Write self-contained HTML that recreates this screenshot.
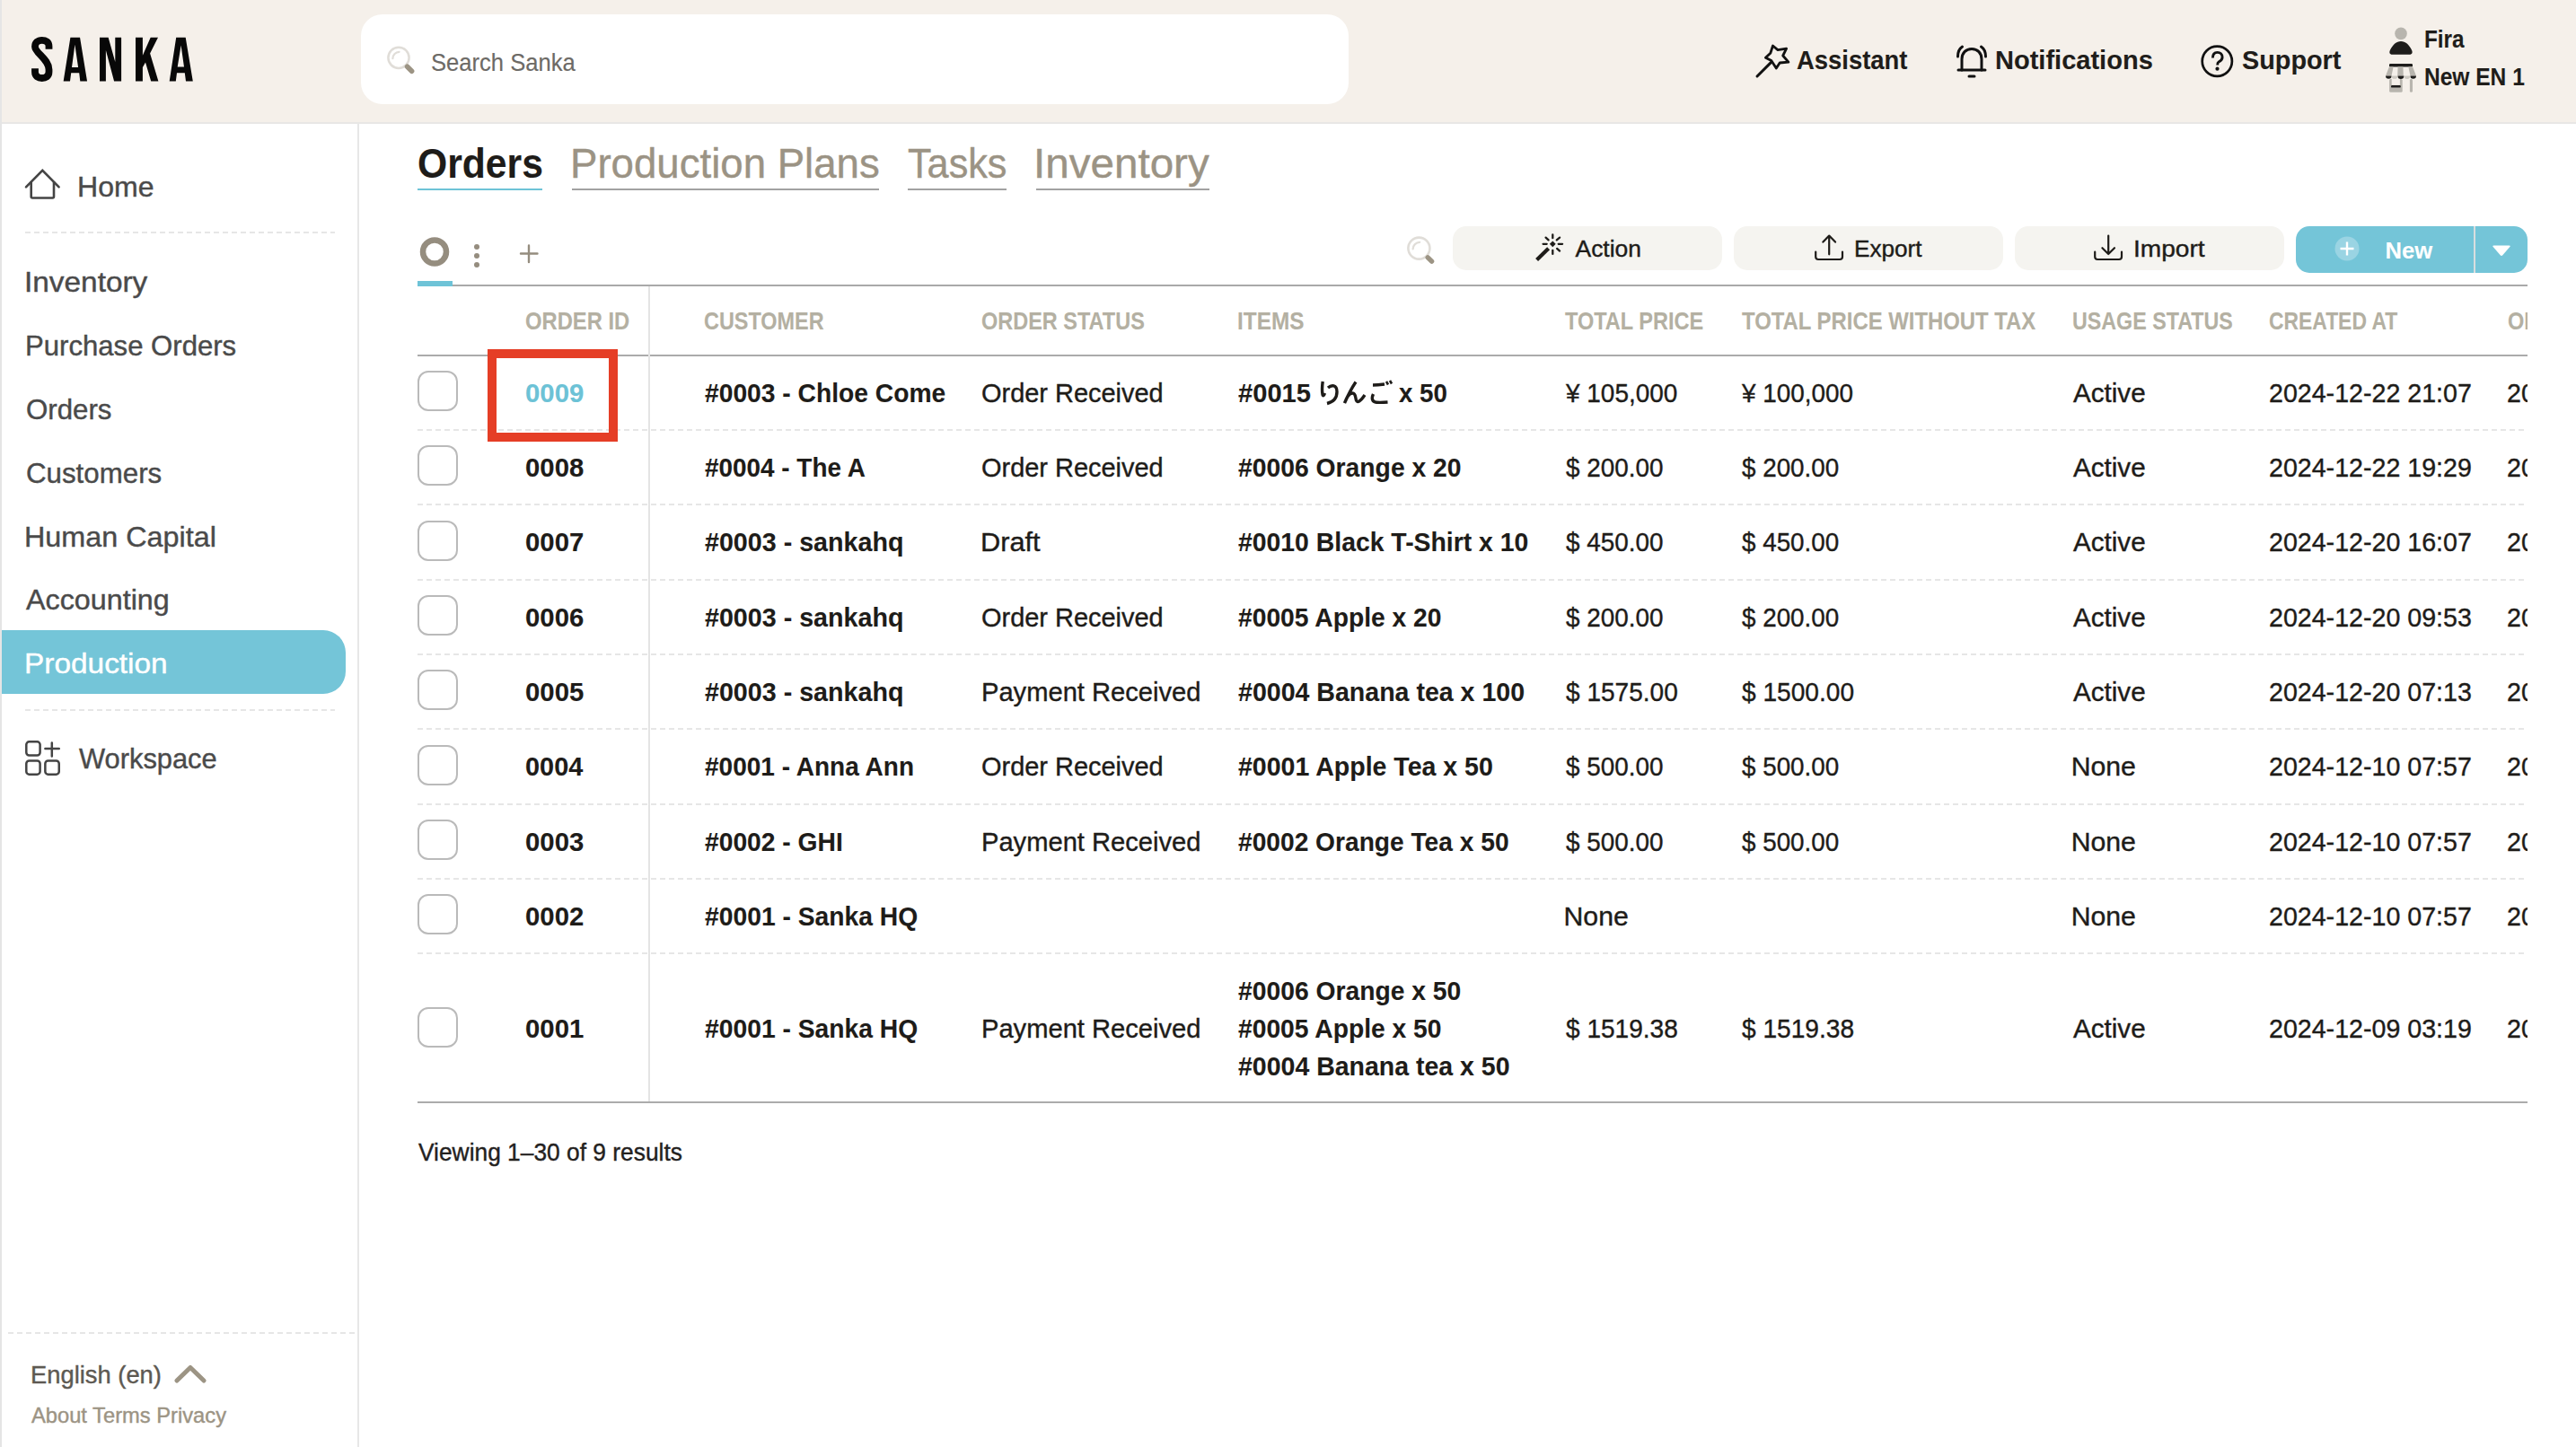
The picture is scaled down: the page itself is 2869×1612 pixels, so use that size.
<!DOCTYPE html>
<html><head><meta charset="utf-8"><title>Sanka</title>
<style>
html,body{margin:0;padding:0;width:2869px;height:1612px;overflow:hidden;background:#fff;font-family:"Liberation Sans",sans-serif;}
.a{position:absolute;box-sizing:border-box;}
.t{position:absolute;white-space:pre;line-height:1;transform-origin:0 0;font-family:"Liberation Sans",sans-serif;-webkit-text-stroke:0.4px currentColor;}
.t.b{-webkit-text-stroke:0.1px currentColor;}
.t.ns{-webkit-text-stroke:0.15px currentColor;}
svg{position:absolute;overflow:visible;}
.hdash{position:absolute;height:2px;background:repeating-linear-gradient(90deg,#e6e6e6 0 6px,transparent 6px 10px);}
.cb{position:absolute;width:45px;height:45px;border:2px solid #bababa;border-radius:12px;box-sizing:border-box;background:#fff;}
.btn{position:absolute;top:252px;height:49px;border-radius:15px;background:#f5f4f0;}
#tbl{position:absolute;left:0;top:0;width:2815px;height:1612px;overflow:hidden;}
</style></head><body>
<!-- header -->
<div class="a" style="left:0;top:0;width:2869px;height:138px;background:#f5f0ea;border-bottom:2px solid #e8e7e5;"></div>
<div class="a" style="left:0;top:0;width:2px;height:1612px;background:#e5e5e5;"></div>
<!-- logo -->
<svg width="240" height="120" style="left:0;top:0" viewBox="0 0 240 120">
 <path d="M54.5,54.8 L54.5,51.5 C54.5,46.5 51,44.8 46.7,44.8 C42,44.8 39,47.5 39,52 C39,59 54.5,66 54.5,77.5 L54.5,80 C54.5,85 51,87 46.7,87 C42.5,87 39,85 39,80 L39,76.2" fill="none" stroke="#080808" stroke-width="7.8"/>
 <path fill="#080808" fill-rule="evenodd" d="M70.65,90.4 L78.4,41.65 L89.05,41.65 L97.05,90.4 L89.3,90.4 L88.2,81.2 L79.2,81.2 L78.0,90.4 Z M80,75 L83.4,49.8 L87.1,75 Z"/>
 <path fill="#080808" d="M111,41.65 L120.65,41.65 L128.3,69 L128.3,41.65 L135.1,41.65 L135.1,90.4 L127.1,90.4 L117.9,56 L117.9,90.4 L111,90.4 Z"/>
 <path fill="#080808" d="M151,41.65 L158.9,41.65 L158.9,61.8 L167.7,41.65 L176,41.65 L167.1,59.5 L176.4,90.4 L168.2,90.4 L162,69.6 L158.9,75 L158.9,90.4 L151,90.4 Z"/>
 <path fill="#080808" fill-rule="evenodd" d="M188.7,90.4 L196.2,41.65 L206.7,41.65 L214.8,90.4 L207,90.4 L205.8,81.2 L197,81.2 L195.8,90.4 Z M197.7,74.6 L201.6,50.6 L205,74.6 Z"/>
</svg>
<!-- search box -->
<div class="a" style="left:401.5px;top:16px;width:1100.5px;height:100px;background:#fff;border-radius:24px;"></div>
<svg width="36" height="36" style="left:429px;top:50px" viewBox="0 0 36 36">
 <circle cx="15" cy="14.3" r="11.6" fill="none" stroke="#e0ddd8" stroke-width="2.5"/>
 <path d="M8.4,15.2 A7.6,7.6 0 0 1 15.6,7.8" fill="none" stroke="#e0ddd8" stroke-width="2.2" stroke-linecap="round"/>
 <path d="M24.6,24.2 L29.6,29.2" stroke="#9c9484" stroke-width="5.6" stroke-linecap="round"/>
</svg>
<!-- assistant icon -->
<svg width="40" height="40" style="left:1954px;top:48px" viewBox="0 0 40 40">
 <path d="M3,37 L18.6,21.4" stroke="#111" stroke-width="3" stroke-linecap="round"/>
 <path d="M20.5,3 L26,7.6 L35.6,6.2 L31.7,14 L37.9,21.2 L28.2,22 L24.3,28 L18.8,19.6 L12.4,16.3 L17.8,11.2 Z" fill="none" stroke="#111" stroke-width="2.8" stroke-linejoin="round"/>
</svg>
<!-- bell -->
<svg width="40" height="40" style="left:2177px;top:49px" viewBox="0 0 40 40">
 <g fill="none" stroke="#111" stroke-width="3" stroke-linecap="round">
 <path d="M8,29 L8,17 C8,10 12.5,5.5 19,5.5 C25.5,5.5 30,10 30,17 L30,29"/>
 <path d="M4,29 L34,29"/>
 <path d="M16,36 L22,36"/>
 <path d="M3.5,14 C3.5,9 5.5,5 8.5,3"/>
 <path d="M34.5,14 C34.5,9 32.5,5 29.5,3"/>
 </g>
</svg>
<!-- support -->
<svg width="40" height="40" style="left:2449px;top:48px" viewBox="0 0 40 40">
 <circle cx="20.3" cy="20.3" r="16.6" fill="none" stroke="#111" stroke-width="2.7"/>
 <path d="M15.4,16.6 C15.4,12.6 17.6,10.4 20.6,10.4 C23.8,10.4 26.1,12.5 26.1,15.8 C26.1,19 23.8,20.1 22,21 C20.9,21.6 20.7,22.6 20.7,24.4" fill="none" stroke="#111" stroke-width="2.9"/>
 <circle cx="20.5" cy="28.7" r="2.1" fill="#111"/>
</svg>
<!-- user -->
<svg width="30" height="34" style="left:2660px;top:29px" viewBox="0 0 30 34">
 <circle cx="14" cy="8.4" r="6.8" fill="#b8b5ae"/>
 <path d="M4.5,31.8 C1.5,31.8 0.6,29.6 2,26.8 C5,20.6 9,17 14,17 C19,17 23,20.6 26,26.8 C27.4,29.6 26.5,31.8 23.5,31.8 Z" fill="#1e1d1b"/>
</svg>
<!-- store -->
<svg width="38" height="36" style="left:2656px;top:70px" viewBox="0 0 38 36">
 <rect x="5" y="0.9" width="26" height="3.5" rx="1.2" fill="#1e1d1b"/>
 <path d="M5,4.3 L9.6,4.3 L7.5,14.4 L1,14.4 Z M14.6,4.3 L20.4,4.3 L20.8,14.4 L14.2,14.4 Z M26.3,4.3 L31,4.3 L35,14.4 L28.5,14.4 Z" fill="#b8b5ae"/>
 <path d="M1,14.4 A3.3,3.3 0 0 0 7.6,14.4 Z M14.4,14.4 A3.5,3.5 0 0 0 21.4,14.4 Z M28.4,14.4 A3.3,3.3 0 0 0 35,14.4 Z" fill="#1e1d1b"/>
 <path d="M7.6,14.4 A3.4,3.4 0 0 0 14.4,14.4 Z M21.4,14.4 A3.5,3.5 0 0 0 28.4,14.4 Z" fill="#cdc9c2"/>
 <rect x="5.1" y="18" width="14.6" height="14.7" rx="1.5" fill="#b8b5ae"/>
 <rect x="7.7" y="18" width="9.2" height="6.8" fill="#f5f0ea"/>
 <rect x="7" y="25" width="10.8" height="2.6" rx="1.2" fill="#1e1d1b"/>
 <rect x="27.9" y="18" width="3.1" height="14.7" rx="1.5" fill="#b8b5ae"/>
</svg>
<!-- sidebar -->
<div class="a" style="left:398px;top:138px;width:2px;height:1474px;background:#e7e7e7;"></div>
<svg width="44" height="40" style="left:26px;top:186px" viewBox="0 0 44 40">
 <path d="M3,22.4 L21.3,3.8 L39.6,22.4" fill="none" stroke="#444" stroke-width="2.6" stroke-linecap="round" stroke-linejoin="miter"/>
 <path d="M8.7,16.5 L8.7,33 Q8.7,34.5 10.2,34.5 L32.5,34.5 Q34,34.5 34,33 L34,16.5" fill="none" stroke="#444" stroke-width="2.6"/>
</svg>
<div class="hdash" style="left:28px;top:258px;width:345px;"></div>
<div class="a" style="left:2px;top:702px;width:383px;height:71px;background:#74c5d8;border-radius:0 25px 25px 0;"></div>
<div class="hdash" style="left:28px;top:790px;width:345px;"></div>
<svg width="44" height="44" style="left:26px;top:823px" viewBox="0 0 44 44">
 <g fill="none" stroke="#444" stroke-width="2.5" stroke-linecap="round">
 <rect x="3.3" y="3.35" width="15.3" height="15.2" rx="3.2"/>
 <rect x="3.3" y="24.45" width="15.3" height="15.2" rx="3.2"/>
 <rect x="24.35" y="24.45" width="15.4" height="15.2" rx="3.2"/>
 <path d="M31.8,4.5 L31.8,19.6 M24.4,11 L39.75,11"/>
 </g>
</svg>
<div class="hdash" style="left:9px;top:1484px;width:389px;"></div>
<svg width="40" height="24" style="left:193px;top:1518px" viewBox="0 0 40 24">
 <path d="M4,20 L19,5.5 L34,20" fill="none" stroke="#9c9484" stroke-width="5" stroke-linecap="round" stroke-linejoin="round"/>
</svg>
<!-- tabs underline -->
<div class="a" style="left:465px;top:210px;width:139px;height:2px;background:#6ec3d7;"></div>
<div class="a" style="left:637px;top:210px;width:342px;height:2px;background:#a2a2a2;"></div>
<div class="a" style="left:1011px;top:210px;width:110px;height:2px;background:#a2a2a2;"></div>
<div class="a" style="left:1154px;top:210px;width:193px;height:2px;background:#a2a2a2;"></div>
<!-- toolbar -->
<svg width="40" height="40" style="left:464px;top:260px" viewBox="0 0 40 40">
 <circle cx="20" cy="20.5" r="13" fill="none" stroke="#958d7f" stroke-width="6.5"/>
</svg>
<svg width="12" height="32" style="left:525px;top:268px" viewBox="0 0 12 32">
 <circle cx="6" cy="7" r="3" fill="#958d7f"/><circle cx="6" cy="17" r="3" fill="#958d7f"/><circle cx="6" cy="27" r="3" fill="#958d7f"/>
</svg>
<svg width="28" height="28" style="left:575px;top:269px" viewBox="0 0 28 28">
 <path d="M14,4.5 L14,23 M5,13.5 L23.5,13.5" stroke="#958d7f" stroke-width="2.4" stroke-linecap="round"/>
</svg>
<div class="a" style="left:465px;top:317px;width:2350px;height:2px;background:#a9a9a9;"></div>
<div class="a" style="left:465px;top:312.5px;width:39px;height:6.5px;background:#6ec3d7;"></div>
<svg width="36" height="36" style="left:1565px;top:261px" viewBox="0 0 36 36">
 <circle cx="15.4" cy="15.6" r="12" fill="none" stroke="#e0ddd8" stroke-width="2.6"/>
 <path d="M8.6,16.5 A7.8,7.8 0 0 1 16.2,8.8" fill="none" stroke="#e0ddd8" stroke-width="2.2" stroke-linecap="round"/>
 <path d="M25.2,25.8 L29.6,30.2" stroke="#9c9484" stroke-width="5.4" stroke-linecap="round"/>
</svg>
<div class="btn" style="left:1618px;width:300px;"></div>
<div class="btn" style="left:1931px;width:299.5px;"></div>
<div class="btn" style="left:2244px;width:299.5px;"></div>
<svg width="36" height="36" style="left:1707px;top:258px" viewBox="0 0 36 36">
 <path d="M4.6,31.5 L17.6,18.7" stroke="#1e1c19" stroke-width="4.2" stroke-linecap="butt"/>
 <path d="M22.3,10.4 L25.7,13.8 L22.3,17.2 L18.9,13.8 Z" fill="#1e1c19"/>
 <g stroke="#1e1c19" stroke-width="2.3" stroke-linecap="round">
 <path d="M22.3,3.4 L22.3,7.2 M22.3,20.8 L22.3,24.9 M11.6,13.8 L15.7,13.8 M28.7,13.8 L33.1,13.8 M14.6,6.6 L17.6,9.4 M30.1,6.6 L26.8,9.4 M27.1,18.9 L30.1,21.6"/>
 </g>
</svg>
<svg width="36" height="34" style="left:2019px;top:260px" viewBox="0 0 36 34">
 <g fill="none" stroke="#1e1c19" stroke-width="2.2" stroke-linecap="round" stroke-linejoin="round">
 <path d="M3.2,20.6 L3.2,26 Q3.2,29 6.2,29 L30,29 Q33,29 33,26 L33,20.6"/>
 <path d="M18.2,3 L18.2,23.3 M11.4,9.6 L18.2,2.6 L25,9.6"/>
 </g>
</svg>
<svg width="36" height="34" style="left:2330px;top:260px" viewBox="0 0 36 34">
 <g fill="none" stroke="#1e1c19" stroke-width="2.2" stroke-linecap="round" stroke-linejoin="round">
 <path d="M3.2,20.6 L3.2,26 Q3.2,29 6.2,29 L30,29 Q33,29 33,26 L33,20.6"/>
 <path d="M18.2,2.6 L18.2,23 M11.4,16.2 L18.2,23 L25,16.2"/>
 </g>
</svg>
<div class="a" style="left:2557px;top:252px;width:258px;height:52px;background:#74c5d8;border-radius:15px;"></div>
<div class="a" style="left:2755px;top:252px;width:2px;height:52px;background:#d9dedf;"></div>
<svg width="30" height="30" style="left:2599px;top:262px" viewBox="0 0 30 30">
 <circle cx="15" cy="15" r="13.5" fill="#9ad4e3"/>
 <path d="M15,7.5 L15,22.5 M7.5,15 L22.5,15" stroke="#fff" stroke-width="2.4"/>
</svg>
<svg width="24" height="16" style="left:2774px;top:271px" viewBox="0 0 24 16">
 <path d="M3.5,2.5 L20.5,2.5 Q22.5,2.5 21.3,4 L13.3,13.2 Q12,14.6 10.7,13.2 L2.7,4 Q1.5,2.5 3.5,2.5 Z" fill="#fff"/>
</svg>
<!-- table -->
<div id="tbl">
<div class="a" style="left:465px;top:395px;width:2350px;height:2px;background:#ababab;"></div>
<div class="a" style="left:722px;top:319px;width:2px;height:909px;background:#e4e4e4;"></div>
<div class="hdash" style="left:465px;top:478.0px;width:2352px;"></div>
<div class="hdash" style="left:465px;top:561.3px;width:2352px;"></div>
<div class="hdash" style="left:465px;top:644.7px;width:2352px;"></div>
<div class="hdash" style="left:465px;top:728.0px;width:2352px;"></div>
<div class="hdash" style="left:465px;top:811.3px;width:2352px;"></div>
<div class="hdash" style="left:465px;top:894.7px;width:2352px;"></div>
<div class="hdash" style="left:465px;top:978.0px;width:2352px;"></div>
<div class="hdash" style="left:465px;top:1061.3px;width:2352px;"></div>
<div class="a" style="left:465px;top:1227px;width:2350px;height:2px;background:#ababab;"></div>
<div class="cb" style="left:464.8px;top:413.0px;"></div>
<div class="cb" style="left:464.8px;top:496.3px;"></div>
<div class="cb" style="left:464.8px;top:579.7px;"></div>
<div class="cb" style="left:464.8px;top:663.0px;"></div>
<div class="cb" style="left:464.8px;top:746.3px;"></div>
<div class="cb" style="left:464.8px;top:829.7px;"></div>
<div class="cb" style="left:464.8px;top:913.0px;"></div>
<div class="cb" style="left:464.8px;top:996.3px;"></div>
<div class="cb" style="left:464.8px;top:1121.8px;"></div>
<div class="a" style="left:543px;top:389px;width:145px;height:103px;border:10px solid #e53e26;"></div>
<svg width="85" height="30" style="left:1470px;top:423px" viewBox="0 0 85 30">
 <g fill="none" stroke="#1e1c19" stroke-width="3.4" stroke-linecap="butt">
  <path d="M3.2,2 C2.5,7 2.2,12 3,16.5 C3.5,18.5 4.5,18 5.5,15"/>
  <path d="M9,9 C13,5.5 19,5.5 19,13.5 C19,21 14,25 8,26.5"/>
  <path d="M40,2.5 C35,10 31,18 27.5,26 C30,19 33,15 36.5,15 C40,15 39.5,20 40.5,23 C41.5,26 45,24.5 50,17"/>
  <path d="M59,6 C63,6 68,5.5 72,5"/>
  <path d="M59.5,16 C57,21 58.5,25 63,25.2 C67,25.5 71,25.3 75.5,25"/>
  <path d="M74,2 L76,5.5 M78,1 L80,4.5" stroke-width="2.6"/>
 </g>
</svg>
<span class="t ns" style="left:480.10px;top:54.50px;font-size:28.49px;color:#6d6a66;transform:scaleX(0.8984);">Search Sanka</span>
<span class="t b" style="left:2000.60px;top:51.80px;font-size:29.8px;color:#1f1d1a;font-weight:700;transform:scaleX(0.9202);">Assistant</span>
<span class="t b" style="left:2222.25px;top:52.00px;font-size:29.8px;color:#1f1d1a;font-weight:700;transform:scaleX(0.9743);">Notifications</span>
<span class="t b" style="left:2497.20px;top:52.00px;font-size:29.8px;color:#1f1d1a;font-weight:700;transform:scaleX(0.9670);">Support</span>
<span class="t b" style="left:2699.82px;top:30.30px;font-size:27.62px;color:#1f1d1a;font-weight:700;transform:scaleX(0.8811);">Fira</span>
<span class="t b" style="left:2700.09px;top:73.00px;font-size:26.89px;color:#1f1d1a;font-weight:700;transform:scaleX(0.9126);">New EN 1</span>
<span class="t" style="left:85.96px;top:192.80px;font-size:31.4px;color:#4a4a4a;transform:scaleX(1.0212);">Home</span>
<span class="t" style="left:27.37px;top:299.00px;font-size:31.4px;color:#4a4a4a;transform:scaleX(1.0634);">Inventory</span>
<span class="t" style="left:27.52px;top:369.75px;font-size:31.4px;color:#4a4a4a;transform:scaleX(0.9912);">Purchase Orders</span>
<span class="t" style="left:28.51px;top:440.50px;font-size:31.4px;color:#4a4a4a;transform:scaleX(0.9948);">Orders</span>
<span class="t" style="left:28.50px;top:511.50px;font-size:31.4px;color:#4a4a4a;transform:scaleX(0.9963);">Customers</span>
<span class="t" style="left:27.44px;top:583.00px;font-size:31.4px;color:#4a4a4a;transform:scaleX(1.0299);">Human Capital</span>
<span class="t" style="left:28.75px;top:653.00px;font-size:31.4px;color:#4a4a4a;transform:scaleX(1.0286);">Accounting</span>
<span class="t" style="left:27.37px;top:724.00px;font-size:31.4px;color:#ffffff;transform:scaleX(1.0640);">Production</span>
<span class="t" style="left:87.50px;top:830.25px;font-size:31.4px;color:#4a4a4a;transform:scaleX(0.9825);">Workspace</span>
<span class="t" style="left:34.07px;top:1517.00px;font-size:28.34px;color:#5d5952;transform:scaleX(0.9653);">English (en)</span>
<span class="t" style="left:35.00px;top:1566.20px;font-size:23.26px;color:#9c9484;transform:scaleX(1.0198);">About Terms Privacy</span>
<span class="t b" style="left:465.32px;top:160.10px;font-size:45.78px;color:#1e1c19;font-weight:700;transform:scaleX(0.9324);">Orders</span>
<span class="t" style="left:635.01px;top:160.10px;font-size:45.78px;color:#9b9384;transform:scaleX(0.9965);">Production Plans</span>
<span class="t" style="left:1010.96px;top:160.10px;font-size:45.78px;color:#9b9384;transform:scaleX(0.9444);">Tasks</span>
<span class="t" style="left:1150.84px;top:160.10px;font-size:45.78px;color:#9b9384;transform:scaleX(1.0398);">Inventory</span>
<span class="t" style="left:1754.50px;top:264.25px;font-size:26.45px;color:#1e1c19;">Action</span>
<span class="t" style="left:2065.02px;top:264.25px;font-size:26.45px;color:#1e1c19;transform:scaleX(0.9892);">Export</span>
<span class="t" style="left:2375.87px;top:264.25px;font-size:26.45px;color:#1e1c19;transform:scaleX(1.0635);">Import</span>
<span class="t b" style="left:2656.50px;top:267.20px;font-size:25.58px;color:#ffffff;font-weight:700;">New</span>
<span class="t b" style="left:585.13px;top:344.00px;font-size:27.33px;color:#b4b0a2;font-weight:700;transform:scaleX(0.8701);">ORDER ID</span>
<span class="t b" style="left:784.14px;top:344.00px;font-size:27.33px;color:#b4b0a2;font-weight:700;transform:scaleX(0.8573);">CUSTOMER</span>
<span class="t b" style="left:1093.39px;top:344.00px;font-size:27.33px;color:#b4b0a2;font-weight:700;transform:scaleX(0.8594);">ORDER STATUS</span>
<span class="t b" style="left:1377.81px;top:344.00px;font-size:27.33px;color:#b4b0a2;font-weight:700;transform:scaleX(0.8909);">ITEMS</span>
<span class="t b" style="left:1743.30px;top:344.00px;font-size:27.33px;color:#b4b0a2;font-weight:700;transform:scaleX(0.8605);">TOTAL PRICE</span>
<span class="t b" style="left:1939.50px;top:344.00px;font-size:27.33px;color:#b4b0a2;font-weight:700;transform:scaleX(0.8739);">TOTAL PRICE WITHOUT TAX</span>
<span class="t b" style="left:2307.85px;top:344.00px;font-size:27.33px;color:#b4b0a2;font-weight:700;transform:scaleX(0.8510);">USAGE STATUS</span>
<span class="t b" style="left:2527.06px;top:344.00px;font-size:27.33px;color:#b4b0a2;font-weight:700;transform:scaleX(0.8374);">CREATED AT</span>
<span class="t b clip" style="left:2792.54px;top:344.00px;font-size:27.33px;color:#b4b0a2;font-weight:700;transform:scaleX(0.8605);">ORDER</span>
<span class="t b" style="left:585.03px;top:422.50px;font-size:30.23px;color:#6cc2d6;font-weight:700;transform:scaleX(0.9707);">0009</span>
<span class="t b" style="left:785.00px;top:422.50px;font-size:30.23px;color:#1e1c19;font-weight:700;transform:scaleX(0.9341);">#0003 - Chloe Come</span>
<span class="t" style="left:1093.29px;top:422.50px;font-size:30.23px;color:#1e1c19;transform:scaleX(0.9578);">Order Received</span>
<span class="t b" style="left:1379.10px;top:422.50px;font-size:30.23px;color:#1e1c19;font-weight:700;transform:scaleX(0.9637);">#0015</span>
<span class="t b" style="left:1557.50px;top:422.50px;font-size:30.23px;color:#1e1c19;font-weight:700;transform:scaleX(0.9171);">x 50</span>
<span class="t" style="left:1744.42px;top:422.50px;font-size:30.23px;color:#1e1c19;transform:scaleX(0.9248);">¥ 105,000</span>
<span class="t" style="left:1940.42px;top:422.50px;font-size:30.23px;color:#1e1c19;transform:scaleX(0.9233);">¥ 100,000</span>
<span class="t" style="left:2308.70px;top:422.50px;font-size:30.23px;color:#1e1c19;transform:scaleX(0.9793);">Active</span>
<span class="t" style="left:2526.95px;top:422.50px;font-size:30.23px;color:#1e1c19;transform:scaleX(0.9464);">2024-12-22 21:07</span>
<span class="t clip" style="left:2792.45px;top:422.50px;font-size:30.23px;color:#1e1c19;transform:scaleX(0.9464);">2024</span>
<span class="t b" style="left:585.03px;top:505.83px;font-size:30.23px;color:#1e1c19;font-weight:700;transform:scaleX(0.9707);">0008</span>
<span class="t b" style="left:785.00px;top:505.83px;font-size:30.23px;color:#1e1c19;font-weight:700;transform:scaleX(0.9231);">#0004 - The A</span>
<span class="t" style="left:1093.29px;top:505.83px;font-size:30.23px;color:#1e1c19;transform:scaleX(0.9578);">Order Received</span>
<span class="t b" style="left:1378.70px;top:505.83px;font-size:30.23px;color:#1e1c19;font-weight:700;transform:scaleX(0.9364);">#0006 Orange x 20</span>
<span class="t" style="left:1743.50px;top:505.83px;font-size:30.23px;color:#1e1c19;transform:scaleX(0.9223);">$ 200.00</span>
<span class="t" style="left:1939.50px;top:505.83px;font-size:30.23px;color:#1e1c19;transform:scaleX(0.9202);">$ 200.00</span>
<span class="t" style="left:2308.70px;top:505.83px;font-size:30.23px;color:#1e1c19;transform:scaleX(0.9793);">Active</span>
<span class="t" style="left:2526.95px;top:505.83px;font-size:30.23px;color:#1e1c19;transform:scaleX(0.9464);">2024-12-22 19:29</span>
<span class="t clip" style="left:2792.45px;top:505.83px;font-size:30.23px;color:#1e1c19;transform:scaleX(0.9464);">2024</span>
<span class="t b" style="left:585.03px;top:589.17px;font-size:30.23px;color:#1e1c19;font-weight:700;transform:scaleX(0.9707);">0007</span>
<span class="t b" style="left:785.00px;top:589.17px;font-size:30.23px;color:#1e1c19;font-weight:700;transform:scaleX(0.9482);">#0003 - sankahq</span>
<span class="t" style="left:1092.21px;top:589.17px;font-size:30.23px;color:#1e1c19;transform:scaleX(1.0181);">Draft</span>
<span class="t b" style="left:1378.70px;top:589.17px;font-size:30.23px;color:#1e1c19;font-weight:700;transform:scaleX(0.9389);">#0010 Black T-Shirt x 10</span>
<span class="t" style="left:1743.50px;top:589.17px;font-size:30.23px;color:#1e1c19;transform:scaleX(0.9223);">$ 450.00</span>
<span class="t" style="left:1939.50px;top:589.17px;font-size:30.23px;color:#1e1c19;transform:scaleX(0.9202);">$ 450.00</span>
<span class="t" style="left:2308.70px;top:589.17px;font-size:30.23px;color:#1e1c19;transform:scaleX(0.9793);">Active</span>
<span class="t" style="left:2526.95px;top:589.17px;font-size:30.23px;color:#1e1c19;transform:scaleX(0.9464);">2024-12-20 16:07</span>
<span class="t clip" style="left:2792.45px;top:589.17px;font-size:30.23px;color:#1e1c19;transform:scaleX(0.9464);">2024</span>
<span class="t b" style="left:585.03px;top:672.50px;font-size:30.23px;color:#1e1c19;font-weight:700;transform:scaleX(0.9707);">0006</span>
<span class="t b" style="left:785.00px;top:672.50px;font-size:30.23px;color:#1e1c19;font-weight:700;transform:scaleX(0.9482);">#0003 - sankahq</span>
<span class="t" style="left:1093.29px;top:672.50px;font-size:30.23px;color:#1e1c19;transform:scaleX(0.9578);">Order Received</span>
<span class="t b" style="left:1378.70px;top:672.50px;font-size:30.23px;color:#1e1c19;font-weight:700;transform:scaleX(0.9342);">#0005 Apple x 20</span>
<span class="t" style="left:1743.50px;top:672.50px;font-size:30.23px;color:#1e1c19;transform:scaleX(0.9223);">$ 200.00</span>
<span class="t" style="left:1939.50px;top:672.50px;font-size:30.23px;color:#1e1c19;transform:scaleX(0.9202);">$ 200.00</span>
<span class="t" style="left:2308.70px;top:672.50px;font-size:30.23px;color:#1e1c19;transform:scaleX(0.9793);">Active</span>
<span class="t" style="left:2526.95px;top:672.50px;font-size:30.23px;color:#1e1c19;transform:scaleX(0.9464);">2024-12-20 09:53</span>
<span class="t clip" style="left:2792.45px;top:672.50px;font-size:30.23px;color:#1e1c19;transform:scaleX(0.9464);">2024</span>
<span class="t b" style="left:585.03px;top:755.83px;font-size:30.23px;color:#1e1c19;font-weight:700;transform:scaleX(0.9707);">0005</span>
<span class="t b" style="left:785.00px;top:755.83px;font-size:30.23px;color:#1e1c19;font-weight:700;transform:scaleX(0.9482);">#0003 - sankahq</span>
<span class="t" style="left:1093.07px;top:755.83px;font-size:30.23px;color:#1e1c19;transform:scaleX(0.9637);">Payment Received</span>
<span class="t b" style="left:1378.70px;top:755.83px;font-size:30.23px;color:#1e1c19;font-weight:700;transform:scaleX(0.9449);">#0004 Banana tea x 100</span>
<span class="t" style="left:1743.50px;top:755.83px;font-size:30.23px;color:#1e1c19;transform:scaleX(0.9279);">$ 1575.00</span>
<span class="t" style="left:1939.50px;top:755.83px;font-size:30.23px;color:#1e1c19;transform:scaleX(0.9302);">$ 1500.00</span>
<span class="t" style="left:2308.70px;top:755.83px;font-size:30.23px;color:#1e1c19;transform:scaleX(0.9793);">Active</span>
<span class="t" style="left:2526.95px;top:755.83px;font-size:30.23px;color:#1e1c19;transform:scaleX(0.9464);">2024-12-20 07:13</span>
<span class="t clip" style="left:2792.45px;top:755.83px;font-size:30.23px;color:#1e1c19;transform:scaleX(0.9464);">2024</span>
<span class="t b" style="left:585.04px;top:839.16px;font-size:30.23px;color:#1e1c19;font-weight:700;transform:scaleX(0.9561);">0004</span>
<span class="t b" style="left:785.00px;top:839.16px;font-size:30.23px;color:#1e1c19;font-weight:700;transform:scaleX(0.9272);">#0001 - Anna Ann</span>
<span class="t" style="left:1093.29px;top:839.16px;font-size:30.23px;color:#1e1c19;transform:scaleX(0.9578);">Order Received</span>
<span class="t b" style="left:1378.70px;top:839.16px;font-size:30.23px;color:#1e1c19;font-weight:700;transform:scaleX(0.9439);">#0001 Apple Tea x 50</span>
<span class="t" style="left:1743.50px;top:839.16px;font-size:30.23px;color:#1e1c19;transform:scaleX(0.9223);">$ 500.00</span>
<span class="t" style="left:1939.50px;top:839.16px;font-size:30.23px;color:#1e1c19;transform:scaleX(0.9202);">$ 500.00</span>
<span class="t" style="left:2306.70px;top:839.16px;font-size:30.23px;color:#1e1c19;">None</span>
<span class="t" style="left:2526.95px;top:839.16px;font-size:30.23px;color:#1e1c19;transform:scaleX(0.9464);">2024-12-10 07:57</span>
<span class="t clip" style="left:2792.45px;top:839.16px;font-size:30.23px;color:#1e1c19;transform:scaleX(0.9464);">2024</span>
<span class="t b" style="left:585.03px;top:922.50px;font-size:30.23px;color:#1e1c19;font-weight:700;transform:scaleX(0.9707);">0003</span>
<span class="t b" style="left:785.00px;top:922.50px;font-size:30.23px;color:#1e1c19;font-weight:700;transform:scaleX(0.9344);">#0002 - GHI</span>
<span class="t" style="left:1093.07px;top:922.50px;font-size:30.23px;color:#1e1c19;transform:scaleX(0.9637);">Payment Received</span>
<span class="t b" style="left:1378.70px;top:922.50px;font-size:30.23px;color:#1e1c19;font-weight:700;transform:scaleX(0.9317);">#0002 Orange Tea x 50</span>
<span class="t" style="left:1743.50px;top:922.50px;font-size:30.23px;color:#1e1c19;transform:scaleX(0.9223);">$ 500.00</span>
<span class="t" style="left:1939.50px;top:922.50px;font-size:30.23px;color:#1e1c19;transform:scaleX(0.9202);">$ 500.00</span>
<span class="t" style="left:2306.70px;top:922.50px;font-size:30.23px;color:#1e1c19;">None</span>
<span class="t" style="left:2526.95px;top:922.50px;font-size:30.23px;color:#1e1c19;transform:scaleX(0.9464);">2024-12-10 07:57</span>
<span class="t clip" style="left:2792.45px;top:922.50px;font-size:30.23px;color:#1e1c19;transform:scaleX(0.9464);">2024</span>
<span class="t b" style="left:585.03px;top:1005.83px;font-size:30.23px;color:#1e1c19;font-weight:700;transform:scaleX(0.9707);">0002</span>
<span class="t b" style="left:785.00px;top:1005.83px;font-size:30.23px;color:#1e1c19;font-weight:700;transform:scaleX(0.9353);">#0001 - Sanka HQ</span>
<span class="t" style="left:1741.50px;top:1005.83px;font-size:30.23px;color:#1e1c19;">None</span>
<span class="t" style="left:2306.70px;top:1005.83px;font-size:30.23px;color:#1e1c19;">None</span>
<span class="t" style="left:2526.95px;top:1005.83px;font-size:30.23px;color:#1e1c19;transform:scaleX(0.9464);">2024-12-10 07:57</span>
<span class="t clip" style="left:2792.45px;top:1005.83px;font-size:30.23px;color:#1e1c19;transform:scaleX(0.9464);">2024</span>
<span class="t b" style="left:585.03px;top:1130.75px;font-size:30.23px;color:#1e1c19;font-weight:700;transform:scaleX(0.9707);">0001</span>
<span class="t b" style="left:785.00px;top:1130.75px;font-size:30.23px;color:#1e1c19;font-weight:700;transform:scaleX(0.9353);">#0001 - Sanka HQ</span>
<span class="t" style="left:1093.07px;top:1130.75px;font-size:30.23px;color:#1e1c19;transform:scaleX(0.9637);">Payment Received</span>
<span class="t b" style="left:1378.70px;top:1088.75px;font-size:30.23px;color:#1e1c19;font-weight:700;transform:scaleX(0.9355);">#0006 Orange x 50</span>
<span class="t b" style="left:1378.70px;top:1130.65px;font-size:30.23px;color:#1e1c19;font-weight:700;transform:scaleX(0.9342);">#0005 Apple x 50</span>
<span class="t b" style="left:1378.70px;top:1172.55px;font-size:30.23px;color:#1e1c19;font-weight:700;transform:scaleX(0.9429);">#0004 Banana tea x 50</span>
<span class="t" style="left:1743.50px;top:1130.75px;font-size:30.23px;color:#1e1c19;transform:scaleX(0.9279);">$ 1519.38</span>
<span class="t" style="left:1939.50px;top:1130.75px;font-size:30.23px;color:#1e1c19;transform:scaleX(0.9302);">$ 1519.38</span>
<span class="t" style="left:2308.70px;top:1130.75px;font-size:30.23px;color:#1e1c19;transform:scaleX(0.9793);">Active</span>
<span class="t" style="left:2526.95px;top:1130.75px;font-size:30.23px;color:#1e1c19;transform:scaleX(0.9464);">2024-12-09 03:19</span>
<span class="t clip" style="left:2792.45px;top:1130.75px;font-size:30.23px;color:#1e1c19;transform:scaleX(0.9464);">2024</span>
<span class="t" style="left:465.50px;top:1269.00px;font-size:28.34px;color:#23211e;transform:scaleX(0.9300);">Viewing 1–30 of 9 results</span>
</div>
</body></html>
